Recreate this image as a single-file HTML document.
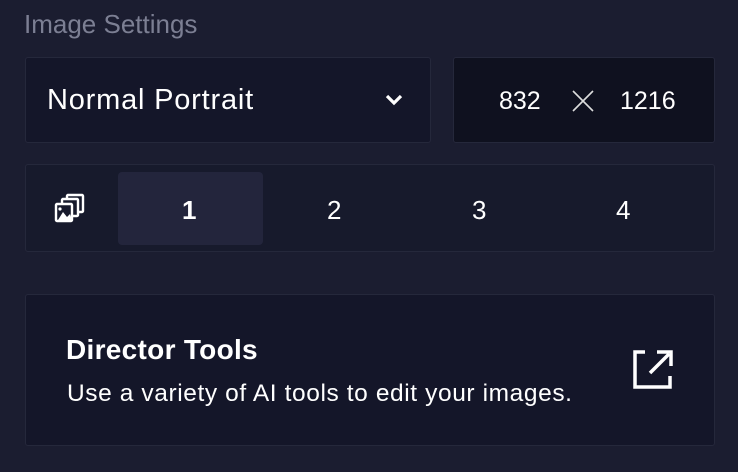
<!DOCTYPE html>
<html><head><style>
body{margin:0;width:738px;height:472px;background:#1b1d30;font-family:"Liberation Sans",sans-serif;color:#fff;position:relative;overflow:hidden}
.a{position:absolute;box-sizing:border-box;white-space:nowrap}
.box{border:1px solid #25283b;border-radius:3px;background:#141629}
</style></head><body>
<div class="a" style="left:24px;top:9px;font-size:26px;color:#7c7f93">Image Settings</div>
<div class="a box" style="left:25px;top:57px;width:406px;height:86px"></div>
<div class="a" style="left:47px;top:84px;font-size:29px;letter-spacing:0.8px">Normal Portrait</div>
<svg class="a" style="left:384px;top:93px" width="20" height="14" viewBox="0 0 20 14"><path d="M3 3l7 7 7-7" stroke="#fff" stroke-width="3.2" fill="none"/></svg>
<div class="a box" style="left:453px;top:57px;width:262px;height:86px;background:#0f111f"></div>
<div class="a" style="left:499px;top:87px;font-size:25px">832</div>
<svg class="a" style="left:571px;top:89px" width="24" height="24" viewBox="0 0 24 24"><path d="M2 2l20 20M22 2L2 22" stroke="#ddd" stroke-width="1.6"/></svg>
<div class="a" style="left:620px;top:87px;font-size:25px">1216</div>
<div class="a box" style="left:25px;top:164px;width:690px;height:88px;background:#171a2c"></div>
<div class="a" style="left:118px;top:172px;width:145px;height:73px;background:#23253c;border-radius:4px"></div>
<svg class="a" style="left:53px;top:193px" width="34" height="32" viewBox="0 0 34 32"><g fill="none" stroke="#fff" stroke-width="2.4"><rect x="14" y="2" width="16" height="17" rx="1"/><rect x="9" y="6" width="16" height="17" rx="1" fill="#171a2c"/><rect x="3" y="11" width="16" height="17" rx="1" fill="#171a2c"/></g><path d="M5 27l5-8 4 5 3-3 2 6z" fill="#fff"/><circle cx="7" cy="16" r="1.6" fill="#fff"/></svg>
<div class="a" style="left:182px;top:195px;font-size:26px;font-weight:bold">1</div>
<div class="a" style="left:327px;top:195px;font-size:26px">2</div>
<div class="a" style="left:472px;top:195px;font-size:26px">3</div>
<div class="a" style="left:616px;top:195px;font-size:26px">4</div>
<div class="a box" style="left:25px;top:294px;width:690px;height:152px"></div>
<div class="a" style="left:66px;top:334px;font-size:28px;font-weight:bold;letter-spacing:0.3px">Director Tools</div>
<div class="a" style="left:67px;top:380px;font-size:24.5px;letter-spacing:0.6px">Use a variety of AI tools to edit your images.</div>
<svg class="a" style="left:631px;top:348px" width="44" height="44" viewBox="0 0 44 44"><path d="M14 4H4v35h35V28" stroke="#fff" stroke-width="3.5" fill="none"/><path d="M19 25L38 6M26 4h14v14" stroke="#fff" stroke-width="3.5" fill="none"/></svg>
</body></html>
